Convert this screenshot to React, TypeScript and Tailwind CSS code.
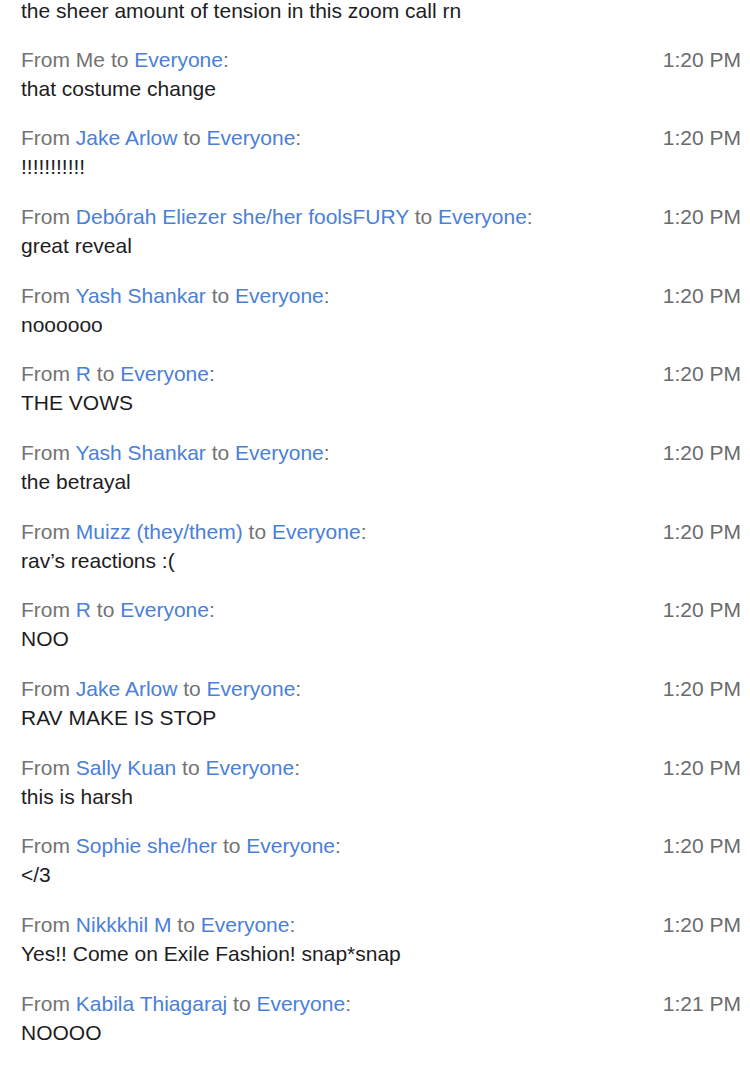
type Message = {
  sender: string;
  isMe?: boolean;
  text: string;
  time: string;
};

const messages: Message[] = [
  { sender: "Me", isMe: true, text: "that costume change", time: "1:20 PM" },
  { sender: "Jake Arlow", text: "!!!!!!!!!!!", time: "1:20 PM" },
  { sender: "Debórah Eliezer she/her foolsFURY", text: "great reveal", time: "1:20 PM" },
  { sender: "Yash Shankar", text: "noooooo", time: "1:20 PM" },
  { sender: "R", text: "THE VOWS", time: "1:20 PM" },
  { sender: "Yash Shankar", text: "the betrayal", time: "1:20 PM" },
  { sender: "Muizz (they/them)", text: "rav’s reactions :(", time: "1:20 PM" },
  { sender: "R", text: "NOO", time: "1:20 PM" },
  { sender: "Jake Arlow", text: "RAV MAKE IS STOP", time: "1:20 PM" },
  { sender: "Sally Kuan", text: "this is harsh", time: "1:20 PM" },
  { sender: "Sophie she/her", text: "</3", time: "1:20 PM" },
  { sender: "Nikkkhil M", text: "Yes!! Come on Exile Fashion! snap*snap", time: "1:20 PM" },
  { sender: "Kabila Thiagaraj", text: "NOOOO", time: "1:21 PM" },
];

const ChatMessage = ({ msg }: { msg: Message }) => {
  return (
    <div className="pt-[18.67px]">
      <div className="flex justify-between items-center h-[30px]">
        <div className="text-[#737373]">
          From{" "}
          {msg.isMe ? (
            <span>Me</span>
          ) : (
            <span className="text-[#4a80d8]">{msg.sender}</span>
          )}{" "}
          to <span className="text-[#4a80d8]">Everyone</span>:
        </div>
        <div className="text-[#6b6b6b] shrink-0">{msg.time}</div>
      </div>
      <div className="text-[#1d1d1f] leading-[28px] pb-[2px]">{msg.text}</div>
    </div>
  );
};

export default function App() {
  return (
    <div
      className="w-[750px] h-[1079px] overflow-hidden bg-white pl-[21px] pr-[9px] text-[21px] leading-[30px]"
      style={{ fontFamily: '"Liberation Sans", Arial, sans-serif' }}
    >
      <div className="-mt-[4px] text-[#1d1d1f] h-[30px]">
        the sheer amount of tension in this zoom call rn
      </div>
      {messages.map((m, i) => (
        <ChatMessage key={i} msg={m} />
      ))}
    </div>
  );
}
